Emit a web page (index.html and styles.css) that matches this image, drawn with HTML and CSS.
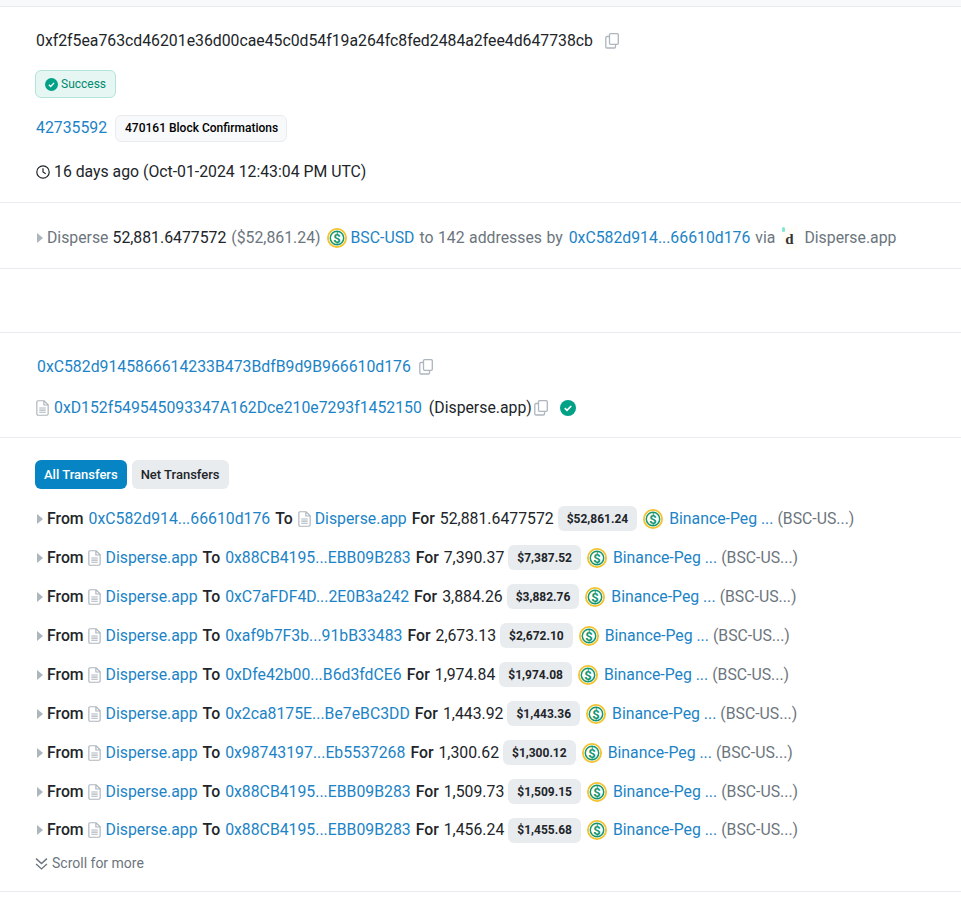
FILE: index.html
```html
<!DOCTYPE html>
<html lang="en">
<head>
<meta charset="utf-8">
<title>Transaction details</title>
<link rel="stylesheet" href="styles.css">
</head>
<body>
<svg class="defs" aria-hidden="true">
  <symbol id="copy" viewBox="0 0 14 16"><path d="M4.5 3.5V1.8C4.5 1.1 5 .7 5.6.7h6.6c.6 0 1.1.5 1.1 1.1v8.4c0 .6-.5 1.1-1.1 1.1H10.500M4.500 3.500H2c-.7 0-1.200.5-1.200 1.200v9.100c0 .7.5 1.200 1.200 1.200h7.300c.7 0 1.200-.5 1.200-1.200V11.300M4.500 3.500v6.700c0 .6.5 1.100 1.100 1.100h4.900" fill="none" stroke="#adb5bd" stroke-width="1.300"/></symbol>
  <symbol id="doc" viewBox="0 0 12 15"><path d="M1.800.7h5.700l3.800 3.800v8.500c0 .7-.5 1.300-1.300 1.300H1.800C1 14.300.7 13.700.7 13V2C.7 1.200 1 .7 1.800.7zM7.300.9v3.800h3.800M3 7.500h6M3 9.500h6M3 11.500h6" fill="none" stroke="#adb5bd" stroke-width="1.100"/></symbol>
  <symbol id="token" viewBox="0 0 20 20"><circle cx="10" cy="10" r="9.100" fill="#fff" stroke="#f3c22e" stroke-width="1.800"/><circle cx="10" cy="10" r="6.700" fill="#fff" stroke="#14966f" stroke-width="1.500"/><text x="10" y="14.500" text-anchor="middle" class="dollar">$</text></symbol>
  <symbol id="check" viewBox="0 0 16 16"><circle cx="8" cy="8" r="8" fill="#00a186"/><path d="M4.800 8.200l2.200 2.200 4.200-4.400" fill="none" stroke="#fff" stroke-width="1.700"/></symbol>
</svg>

<main class="page">
  <section class="block summary">
    <div class="hash-row">
      <span>0xf2f5ea763cd46201e36d00cae45c0d54f19a264fc8fed2484a2fee4d647738cb</span>
      <svg class="copy copy-wide"><use href="#copy"/></svg>
    </div>
    <div class="status"><svg class="status-icon"><use href="#check"/></svg>Success</div>
    <div class="block-row">
      <a class="link">42735592</a>
      <span class="confirm">470161 Block Confirmations</span>
    </div>
    <div class="time-row">
      <svg class="clock" viewBox="0 0 14 14"><circle cx="7" cy="7" r="6.200" fill="none" stroke="#212529" stroke-width="1.200"/><path d="M7 3.300V7l2.700 1.800" fill="none" stroke="#212529" stroke-width="1.200"/></svg>
      <span>16 days ago (Oct-01-2024 12:43:04 PM UTC)</span>
    </div>
  </section>

  <section class="block action">
    <span class="caret"></span>
    <span class="muted">Disperse</span>
    <span>52,881.6477572</span>
    <span class="muted a-usd">($52,861.24)</span>
    <svg class="token a-token"><use href="#token"/></svg>
    <a class="link">BSC-USD</a>
    <span class="muted a-to">to 142 addresses by</span>
    <a class="link a-addr">0xC582d914...66610d176</a>
    <span class="muted a-via">via</span>
    <span class="app-logo"><i></i>d</span>
    <span class="muted app-name">Disperse.app</span>
  </section>

  <div class="spacer"></div>

  <section class="block parties">
    <div class="from-row">
      <a class="link">0xC582d9145866614233B473BdfB9d9B966610d176</a>
      <svg class="copy copy-wide"><use href="#copy"/></svg>
    </div>
    <div class="to-row">
      <svg class="doc"><use href="#doc"/></svg>
      <a class="link">0xD152f549545093347A162Dce210e7293f1452150</a>
      <span class="app-dark">(Disperse.app)</span>
      <svg class="copy"><use href="#copy"/></svg>
      <svg class="verified"><use href="#check"/></svg>
    </div>
  </section>

  <section class="transfers">
    <div class="tabs">
      <span class="tab tab-on">All Transfers</span>
      <span class="tab">Net Transfers</span>
    </div>

    <div class="row">
      <span class="caret"></span><b>From</b><a class="link">0xC582d914...66610d176</a><b>To</b>
      <svg class="doc doc-tight"><use href="#doc"/></svg><a class="link">Disperse.app</a><b>For</b><span>52,881.6477572</span>
      <span class="price">$52,861.24</span><svg class="token"><use href="#token"/></svg><a class="link">Binance-Peg ...</a><span class="muted sym">(BSC-US...)</span>
    </div>
    <div class="row">
      <span class="caret"></span><b>From</b><svg class="doc doc-from"><use href="#doc"/></svg><a class="link">Disperse.app</a><b>To</b><a class="link">0x88CB4195...EBB09B283</a><b>For</b><span>7,390.37</span>
      <span class="price">$7,387.52</span><svg class="token"><use href="#token"/></svg><a class="link">Binance-Peg ...</a><span class="muted sym">(BSC-US...)</span>
    </div>
    <div class="row">
      <span class="caret"></span><b>From</b><svg class="doc doc-from"><use href="#doc"/></svg><a class="link">Disperse.app</a><b>To</b><a class="link">0xC7aFDF4D...2E0B3a242</a><b>For</b><span>3,884.26</span>
      <span class="price">$3,882.76</span><svg class="token"><use href="#token"/></svg><a class="link">Binance-Peg ...</a><span class="muted sym">(BSC-US...)</span>
    </div>
    <div class="row">
      <span class="caret"></span><b>From</b><svg class="doc doc-from"><use href="#doc"/></svg><a class="link">Disperse.app</a><b>To</b><a class="link">0xaf9b7F3b...91bB33483</a><b>For</b><span>2,673.13</span>
      <span class="price">$2,672.10</span><svg class="token"><use href="#token"/></svg><a class="link">Binance-Peg ...</a><span class="muted sym">(BSC-US...)</span>
    </div>
    <div class="row">
      <span class="caret"></span><b>From</b><svg class="doc doc-from"><use href="#doc"/></svg><a class="link">Disperse.app</a><b>To</b><a class="link">0xDfe42b00...B6d3fdCE6</a><b>For</b><span>1,974.84</span>
      <span class="price">$1,974.08</span><svg class="token"><use href="#token"/></svg><a class="link">Binance-Peg ...</a><span class="muted sym">(BSC-US...)</span>
    </div>
    <div class="row">
      <span class="caret"></span><b>From</b><svg class="doc doc-from"><use href="#doc"/></svg><a class="link">Disperse.app</a><b>To</b><a class="link">0x2ca8175E...Be7eBC3DD</a><b>For</b><span>1,443.92</span>
      <span class="price">$1,443.36</span><svg class="token"><use href="#token"/></svg><a class="link">Binance-Peg ...</a><span class="muted sym">(BSC-US...)</span>
    </div>
    <div class="row">
      <span class="caret"></span><b>From</b><svg class="doc doc-from"><use href="#doc"/></svg><a class="link">Disperse.app</a><b>To</b><a class="link">0x98743197...Eb5537268</a><b>For</b><span>1,300.62</span>
      <span class="price">$1,300.12</span><svg class="token"><use href="#token"/></svg><a class="link">Binance-Peg ...</a><span class="muted sym">(BSC-US...)</span>
    </div>
    <div class="row">
      <span class="caret"></span><b>From</b><svg class="doc doc-from"><use href="#doc"/></svg><a class="link">Disperse.app</a><b>To</b><a class="link">0x88CB4195...EBB09B283</a><b>For</b><span>1,509.73</span>
      <span class="price">$1,509.15</span><svg class="token"><use href="#token"/></svg><a class="link">Binance-Peg ...</a><span class="muted sym">(BSC-US...)</span>
    </div>
    <div class="row row-last">
      <span class="caret"></span><b>From</b><svg class="doc doc-from"><use href="#doc"/></svg><a class="link">Disperse.app</a><b>To</b><a class="link">0x88CB4195...EBB09B283</a><b>For</b><span>1,456.24</span>
      <span class="price">$1,455.68</span><svg class="token"><use href="#token"/></svg><a class="link">Binance-Peg ...</a><span class="muted sym">(BSC-US...)</span>
    </div>

    <div class="more">
      <svg class="chev" viewBox="0 0 12 12"><path d="M1 1.500l5 4.500 5-4.500M1 6.500l5 4.500 5-4.500" fill="none" stroke="#6c757d" stroke-width="1.300"/></svg>
      <span>Scroll for more</span>
    </div>
  </section>
</main>
</body>
</html>
```

FILE: styles.css
```css
* { box-sizing: border-box; }
html, body { margin: 0; padding: 0; background: #fff; }
body {
  font-family: Roboto, "Liberation Sans", sans-serif;
  font-size: 15.8px;
  line-height: 22px;
  color: #212529;
  overflow: hidden;
  height: 897px;
}
.defs { display: none; }
.dollar { font: 700 13px Roboto, sans-serif; fill: #14966f; }
.page { border-top: 6px solid #f8f9fa; }
.block, .transfers { border-top: 1px solid #e9ecef; }
.link { color: #1c84c6; }
.muted { color: #6c757d; }

.summary { height: 196px; padding: 23px 36px 0; }
.hash-row { display: flex; align-items: center; height: 22px; }
.copy { width: 14px; height: 16px; flex: none; }
.copy-wide { margin-left: 12px; }
.status {
  display: flex; align-items: center; gap: 3px;
  width: 81px; height: 28px; margin: 18px 0 0 -1px; padding-left: 9px;
  background: #e6f6f3; border: 1px solid #b3e3da; border-radius: 6px;
  color: #00896f; font-size: 12px;
}
.status-icon { width: 13px; height: 13px; }
.block-row { display: flex; align-items: center; gap: 8px; margin-top: 16px; height: 28px; }
.confirm {
  display: flex; align-items: center; height: 27px; padding: 0 8px 1px 9px;
  background: #f8f9fa; border: 1px solid #e9ecef; border-radius: 6px;
  font-size: 12px; font-weight: 500; color: #000;
}
.time-row { display: flex; align-items: center; gap: 4px; margin-top: 19px; }
.clock { width: 14px; height: 14px; }

.action { display: flex; align-items: center; gap: 4px; height: 66px; padding: 4px 0 0 37px; }
.caret {
  width: 0; height: 0; flex: none;
  border-left: 6px solid #adb5bd; border-top: 5px solid transparent; border-bottom: 5px solid transparent;
}
.a-usd { margin-left: 1px; }
.a-token { margin-left: 2px; }
.a-to { margin-left: 1px; word-spacing: .6px; }
.a-addr { margin-left: 2px; }
.a-via { margin-left: 1px; }
.token { width: 20px; height: 20px; flex: none; }
.app-logo {
  position: relative; width: 16px; height: 22px; margin-left: 2px;
  font: 700 15px/25px "Liberation Serif", serif; text-align: center; background: #fffdf8; color: #333;
}
.app-logo i { position: absolute; left: 1px; top: 0; width: 3px; height: 5px; background: #7fe8d5; border-radius: 2px; }
.app-name { margin-left: 3px; }

.spacer { height: 64px; border-top: 1px solid #e9ecef; }
.parties { height: 105px; padding: 23px 37px 0; }
.from-row { display: flex; align-items: center; height: 22px; }
.from-row .copy-wide { margin-left: 8px; }
.to-row { display: flex; align-items: center; height: 22px; margin-top: 19px; }
.doc { width: 13px; height: 16px; flex: none; }
.to-row .doc { margin: 0 5px 0 -1px; }
.app-dark { margin: 0 2px 0 7px; }
.verified { width: 16px; height: 16px; margin-left: 12px; }

.transfers { padding: 22px 0 0 35px; border-bottom: 1px solid #e9ecef; height: 455px; }
.tabs { display: flex; gap: 5px; margin-bottom: 10px; }
.tab {
  display: flex; align-items: center; height: 29px; padding: 0 9px;
  background: #e9ecef; border-radius: 6px; font-size: 13px; font-weight: 500; color: #212529;
}
.tab-on { background: #0784c3; color: #fff; }
.row { display: flex; align-items: center; gap: 5px; height: 39px; padding-left: 2px; white-space: nowrap; }
.row-last { height: 38px; }
.row b { font-weight: 500; }
.row .doc-tight { margin-right: -1px; }
.row .doc-from { margin: 0 0 0 -1px; }
.row .caret { margin-right: -1px; }
.price {
  display: flex; align-items: center; height: 25px; padding: 0 9px; margin-left: -1px;
  background: #e9ecef; border-radius: 6px; font-size: 12px; font-weight: 700; color: #212529;
}
.row .token { margin: 0 1px 0 1px; }
.row .sym { margin-left: -1px; }
.more { display: flex; align-items: center; gap: 4px; height: 28px; color: #6c757d; font-size: 14px; }
.chev { width: 13px; height: 13px; }
```
